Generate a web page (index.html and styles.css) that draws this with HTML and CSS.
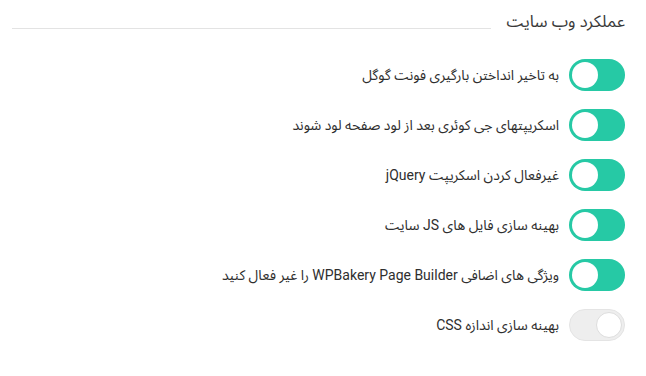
FILE: index.html
```html
<!DOCTYPE html>
<html lang="fa" dir="rtl">
<head>
<meta charset="utf-8">
<title>عملکرد وب سایت</title>
<link rel="stylesheet" href="styles.css">
</head>
<body>
<div class="panel">
  <div class="header">
    <h2 class="title">عملکرد وب سایت</h2>
    <div class="rule"></div>
  </div>
  <ul class="options">
    <li class="option"><span class="switch on"><span class="knob"></span></span><span class="label">به تاخیر انداختن بارگیری فونت گوگل</span></li>
    <li class="option"><span class="switch on"><span class="knob"></span></span><span class="label">اسکریپتهای جی کوئری بعد از لود صفحه لود شوند</span></li>
    <li class="option"><span class="switch on"><span class="knob"></span></span><span class="label">غیرفعال کردن اسکریپت jQuery</span></li>
    <li class="option"><span class="switch on"><span class="knob"></span></span><span class="label">بهینه سازی فایل های JS سایت</span></li>
    <li class="option"><span class="switch on"><span class="knob"></span></span><span class="label">ویژگی های اضافی WPBakery Page Builder را غیر فعال کنید</span></li>
    <li class="option"><span class="switch off"><span class="knob"></span></span><span class="label">بهینه سازی اندازه CSS</span></li>
  </ul>
</div>
</body>
</html>
```
FILE: styles.css
```css
html, body {
  margin: 0;
  padding: 0;
  background: #ffffff;
}
body {
  font-family: Roboto, "Noto Sans Arabic", "DejaVu Sans", sans-serif;
  color: #333333;
}
.panel {
  padding: 8px 21px 0 12px;
}
.header {
  display: flex;
  align-items: center;
  gap: 16px;
  height: 26px;
}
.title {
  margin: 0;
  font-size: 16.6px;
  font-weight: normal;
  color: #3a3a3a;
  white-space: nowrap;
}
.rule {
  flex: 1;
  height: 1px;
  background: #e3e3e3;
  margin-top: 14px;
}
.options {
  list-style: none;
  margin: 25px 0 0 0;
  padding: 0;
  display: flex;
  flex-direction: column;
  gap: 18px;
}
.option {
  display: flex;
  align-items: center;
  gap: 10px;
  height: 32px;
  font-size: 14px;
  color: #2e2e2e;
}
.switch {
  box-sizing: border-box;
  width: 56px;
  height: 32px;
  border-radius: 16px;
  padding: 3px;
  display: flex;
  justify-content: flex-end;
  flex: none;
}
.switch.on {
  background: #26c9a5;
}
.switch.off {
  background: #eeeeee;
  border: 1px solid #e4e4e4;
  justify-content: flex-start;
  padding: 2px;
}
.knob {
  width: 26px;
  height: 26px;
  border-radius: 50%;
  background: #ffffff;
  box-sizing: border-box;
}
.switch.off .knob {
  border: 1px solid #dddddd;
}
```
